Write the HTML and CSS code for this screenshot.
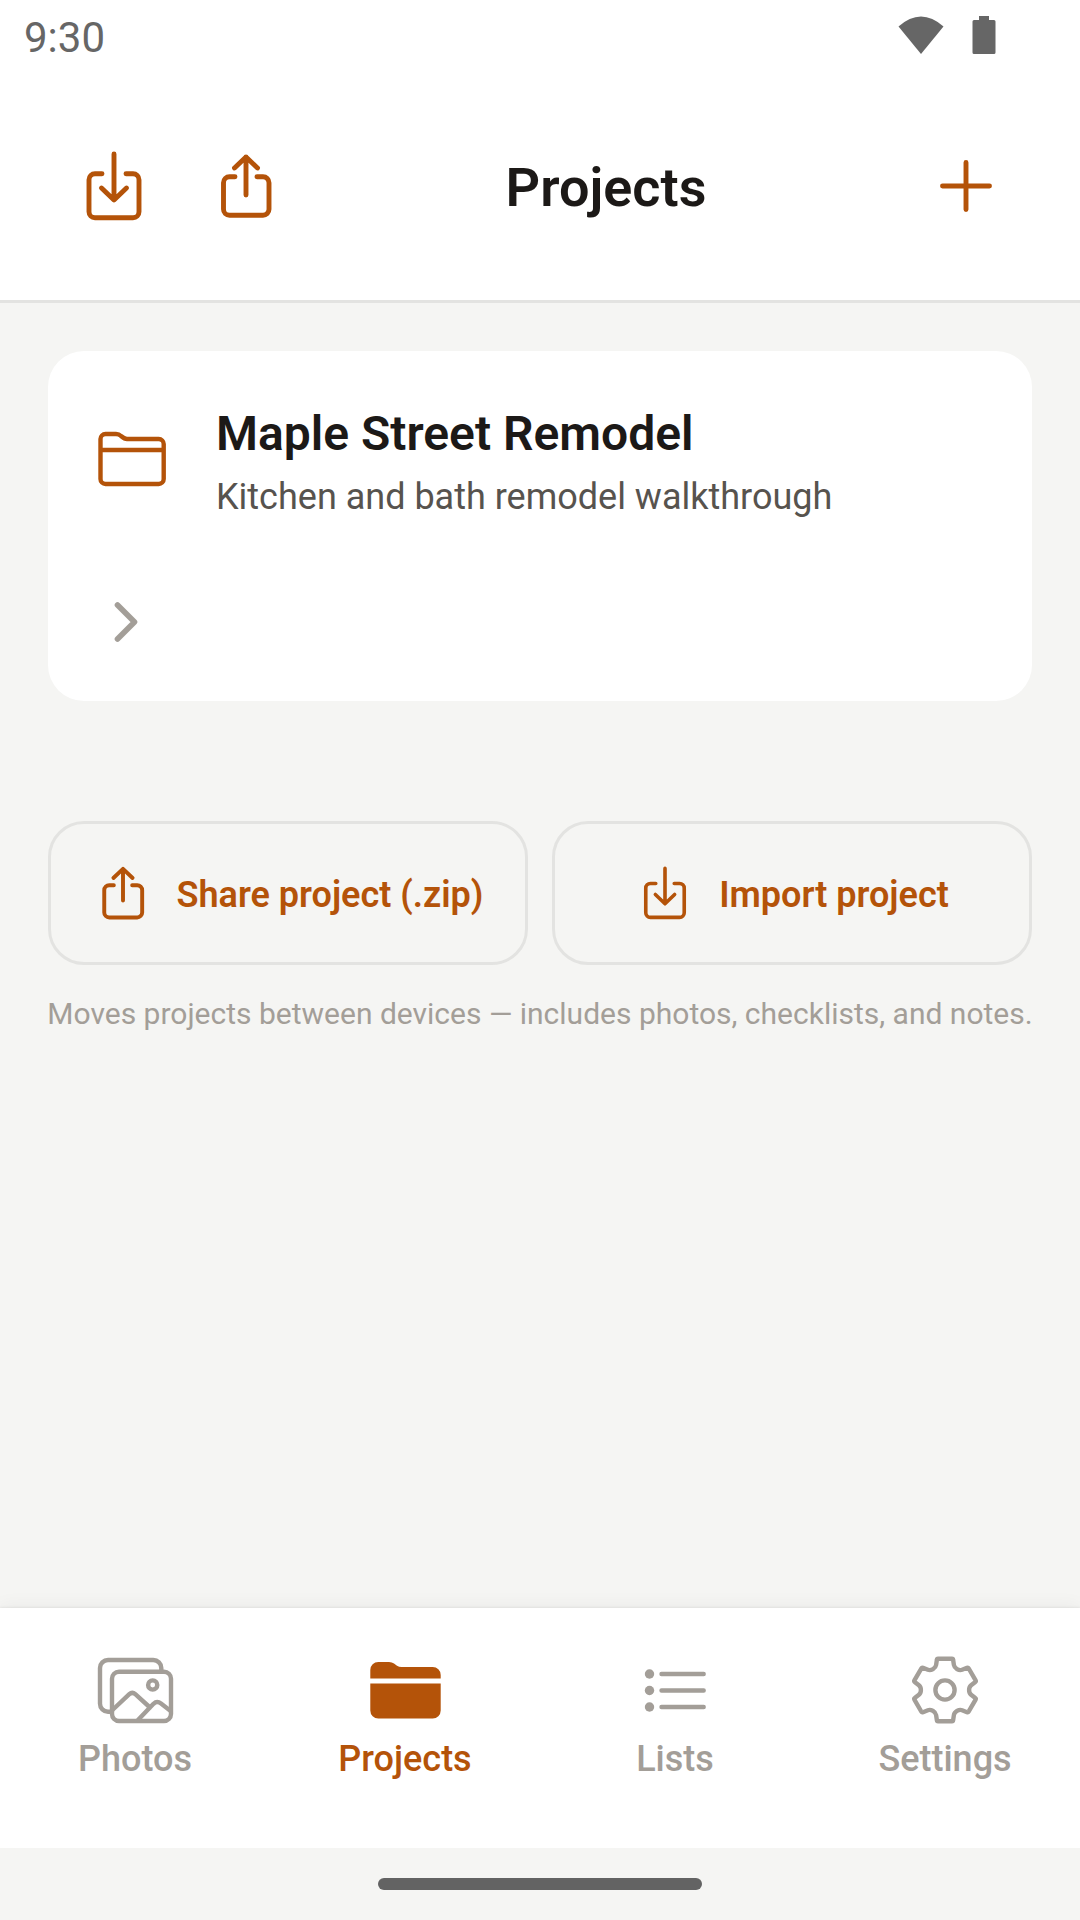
FILE: index.html
```html
<!DOCTYPE html>
<html lang="en">
<head>
  <meta charset="UTF-8">
  <meta name="viewport" content="width=device-width, initial-scale=1">
  <title>Projects</title>
  <link rel="stylesheet" href="styles.css">
</head>
<body>

  <!-- Shared icons -->
  <svg class="sprite" aria-hidden="true">
    <symbol id="icon-import" viewBox="0 0 78 78">
      <path d="M27 26.7H20a6 6 0 0 0-6 6V64.7a6 6 0 0 0 6 6H58a6 6 0 0 0 6-6V32.7a6 6 0 0 0-6-6H51M39 7V53M26.5 41L39 53L51.5 41"></path>
    </symbol>
    <symbol id="icon-share" viewBox="0 0 72 72">
      <path d="M25 26.7H19.5a6 6 0 0 0-6 6V59.3a6 6 0 0 0 6 6H53a6 6 0 0 0 6-6V32.7a6 6 0 0 0-6-6H47M36 7V45M24.5 18L36 7L47.5 18"></path>
    </symbol>
  </svg>

  <div class="status-bar">
    <span>9:30</span>
    <div class="status-icons">
      <svg class="wifi" viewBox="0 0 46 38">
        <path d="M0.5 10.5Q23-9.5 45.500 10.500L23 38Z"></path>
      </svg>
      <svg class="battery" viewBox="0 0 24 38">
        <path d="M7 0h10v4h5a1.5 1.5 0 0 1 1.5 1.5v31A1.5 1.5 0 0 1 22 38H2a1.5 1.5 0 0 1-1.5-1.5v-31A1.5 1.5 0 0 1 2 4h5z"></path>
      </svg>
    </div>
  </div>

  <header class="header">
    <button class="icon-button" aria-label="Import project">
      <svg class="icon icon-large"><use href="#icon-import"></use></svg>
    </button>
    <button class="icon-button" aria-label="Share project">
      <svg class="icon icon-medium"><use href="#icon-share"></use></svg>
    </button>
    <h1>Projects</h1>
    <button class="icon-button" aria-label="New project">
      <svg class="icon icon-medium" viewBox="0 0 72 72">
        <path d="M36 12.500V59.500M12.500 36H59.500"></path>
      </svg>
    </button>
  </header>

  <main class="content">
    <a class="card" href="#project">
      <div class="card-row">
        <svg class="icon icon-medium" viewBox="0 0 72 72">
          <path d="M4.5 56V16a5 5 0 0 1 5-5H20q3 0 5 2q3.5 3 6 3H62.7a5 5 0 0 1 5 5V56a5 5 0 0 1-5 5H9.5a5 5 0 0 1-5-5zM4.5 27H67.7"></path>
        </svg>
        <div class="card-text">
          <h2>Maple Street Remodel</h2>
          <p>Kitchen and bath remodel walkthrough</p>
        </div>
      </div>
      <svg class="icon chevron" viewBox="0 0 60 60">
        <path d="M21.5 13L38.500 30L21.5 47"></path>
      </svg>
    </a>

    <div class="actions">
      <button class="action">
        <svg class="icon icon-small"><use href="#icon-share"></use></svg>
        <span>Share project (.zip)</span>
      </button>
      <button class="action">
        <svg class="icon icon-small"><use href="#icon-import"></use></svg>
        <span>Import project</span>
      </button>
    </div>
    <p class="hint">Moves projects between devices — includes photos, checklists, and notes.</p>
  </main>

  <nav class="tabs">
    <a class="tab" href="#photos">
      <svg class="icon tab-icon" viewBox="0 0 84 72">
        <path d="M19 57.7H15a8 8 0 0 1-8-8V14a8 8 0 0 1 8-8H60.3a8 8 0 0 1 8 8V17"></path>
        <rect x="19" y="17.7" width="59" height="49.3" rx="7"></rect>
        <circle cx="59.7" cy="31" r="4.6"></circle>
        <path d="M20 55.5L36.3 40.2Q39.3 37.5 42.3 40.2L57 53.5M45 66L60.5 49.8Q64 46.5 68 49.5L77 56.5"></path>
      </svg>
      Photos
    </a>
    <a class="tab active" href="#projects" aria-current="page">
      <svg class="icon tab-icon" viewBox="0 0 84 72">
        <path class="solid" d="M7.3 24.5V16a8 8 0 0 1 8-8H26q3 0 5 1.5L34 11.8Q36 13 38.5 13H69.7a8 8 0 0 1 8 8V24.5zM7.3 29.5H77.7V56.5a8 8 0 0 1-8 8H15.3a8 8 0 0 1-8-8z"></path>
      </svg>
      Projects
    </a>
    <a class="tab" href="#lists">
      <svg class="icon tab-icon" viewBox="0 0 84 72">
        <path d="M28.5 20H70.7M28.5 36.5H70.7M28.5 53H70.7"></path>
        <circle class="solid" cx="16.5" cy="20" r="4.7"></circle>
        <circle class="solid" cx="16.5" cy="36.5" r="4.7"></circle>
        <circle class="solid" cx="16.5" cy="53" r="4.7"></circle>
      </svg>
      Lists
    </a>
    <a class="tab" href="#settings">
      <svg class="icon tab-icon" viewBox="-42 -36 84 72">
        <path d="M-7 -31.3H7Q8 -31.3 8.1 -30.3L8.9 -25Q9.3 -22.5 12 -20.9Q14.8 -19.3 17.1 -20.2L22 -22.2Q23.1 -22.6 23.6 -21.7L30.6 -9.6Q31.1 -8.7 30.3 -8.1L26.1 -4.8Q24.1 -3.2 24.1 0Q24.1 3.2 26.1 4.8L30.3 8.1Q31.1 8.7 30.6 9.6L23.6 21.7Q23.1 22.6 22 22.2L17.1 20.2Q14.8 19.3 12 20.9Q9.3 22.5 8.9 25L8.1 30.3Q8 31.3 7 31.3H-7Q-8 31.3 -8.1 30.3L-8.9 25Q-9.3 22.5 -12 20.9Q-14.8 19.3 -17.1 20.2L-22 22.2Q-23.1 22.6 -23.6 21.7L-30.6 9.6Q-31.1 8.7 -30.3 8.1L-26.1 4.8Q-24.1 3.2 -24.1 0Q-24.1 -3.2 -26.1 -4.8L-30.3 -8.1Q-31.1 -8.7 -30.6 -9.6L-23.6 -21.7Q-23.1 -22.6 -22 -22.2L-17.1 -20.2Q-14.8 -19.3 -12 -20.9Q-9.3 -22.5 -8.9 -25L-8.1 -30.3Q-8 -31.3 -7 -31.3Z"></path>
        <circle cx="0" cy="0" r="9.6"></circle>
      </svg>
      Settings
    </a>
  </nav>

  <div class="home-bar">
    <div class="home-handle"></div>
  </div>

</body>
</html>
```
FILE: styles.css
```css
* {
  box-sizing: border-box;
}

body {
  margin: 0;
  min-height: 100vh;
  display: flex;
  flex-direction: column;
  background: #f5f5f3;
  color: #1c1917;
  font-family: Roboto, "Liberation Sans", sans-serif;
  font-size: 36px;
  line-height: 42px;
}

h1,
h2,
p {
  margin: 0;
}

a {
  color: inherit;
  text-decoration: none;
}

button {
  padding: 0;
  border: none;
  background: none;
  color: #b45309;
  font: inherit;
  cursor: pointer;
}

.sprite {
  position: absolute;
  width: 0;
  height: 0;
}

/* Icons */
.icon {
  display: block;
  flex: none;
  fill: none;
  stroke: currentColor;
  stroke-width: 4.4;
  stroke-linecap: round;
  stroke-linejoin: round;
}

.icon .solid {
  fill: currentColor;
  stroke: none;
}

.icon-small {
  width: 60px;
  height: 60px;
  stroke-width: 4.7;
}

.icon-medium {
  width: 72px;
  height: 72px;
}

.icon-large {
  width: 78px;
  height: 78px;
}

/* Status bar */
.status-bar {
  height: 72px;
  padding: 16px 84px 0 24px;
  display: flex;
  align-items: flex-start;
  justify-content: space-between;
  background: #fff;
  color: #666;
  font-size: 42px;
  line-height: 44px;
}

.status-icons {
  display: flex;
  gap: 28px;
}

.status-icons svg {
  height: 38px;
  fill: #666;
}

.wifi {
  width: 46px;
}

.battery {
  width: 24px;
}

/* Header */
.header {
  padding: 48px;
  display: flex;
  align-items: center;
  background: #fff;
  border-bottom: 3px solid #e3e3e1;
}

.icon-button {
  width: 132px;
  height: 132px;
  display: flex;
  align-items: center;
  justify-content: center;
}

.icon-button .icon {
  stroke-width: 4.9;
}

.header h1 {
  flex: 1;
  padding-top: 4px;
  font-size: 54px;
  line-height: 64px;
  font-weight: 600;
  text-align: center;
}

/* Content */
.content {
  flex: 1;
  padding: 48px;
}

.card {
  display: block;
  padding: 55px 48px 48px;
  background: #fff;
  border-radius: 36px;
}

.card-row {
  display: flex;
  gap: 48px;
}

.card-row .icon {
  margin-top: 17px;
  color: #b45309;
}

.card-text {
  flex: 1;
}

.card h2 {
  margin-bottom: 14px;
  font-size: 48px;
  line-height: 56px;
  font-weight: 600;
}

.card p {
  color: #57534e;
}

.chevron {
  width: 60px;
  height: 60px;
  margin: 74px 0 1px;
  color: #a39e98;
  stroke-width: 5.6;
}

.actions {
  display: flex;
  gap: 24px;
  margin-top: 120px;
}

.action {
  flex: 1;
  height: 144px;
  display: flex;
  align-items: center;
  justify-content: center;
  gap: 24px;
  border: 3px solid #e3e3e1;
  border-radius: 36px;
  font-weight: 600;
}

.action span {
  padding-top: 4px;
}

/* The hint may run slightly past the content column */
.hint {
  margin: 28px -12px 0;
  color: #a39e98;
  font-size: 30px;
  text-align: center;
}

/* Tabs */
.tabs {
  display: flex;
  padding: 46px 0 68px;
  background: #fff;
  box-shadow: 0 -1px 2px rgba(0, 0, 0, 0.06), 0 -4px 16px rgba(0, 0, 0, 0.04);
}

.tab {
  flex: 1;
  display: flex;
  flex-direction: column;
  align-items: center;
  gap: 12px;
  color: #a39e98;
  font-weight: 500;
}

.tab.active {
  color: #b45309;
}

.tab-icon {
  width: 84px;
  height: 72px;
}

/* Bottom gesture area */
.home-bar {
  position: relative;
  height: 72px;
  display: flex;
  align-items: center;
  justify-content: center;
  background: #f5f5f3;
}

.home-handle {
  width: 30%;
  height: 12px;
  border-radius: 6px;
  background: #636363;
}
```
